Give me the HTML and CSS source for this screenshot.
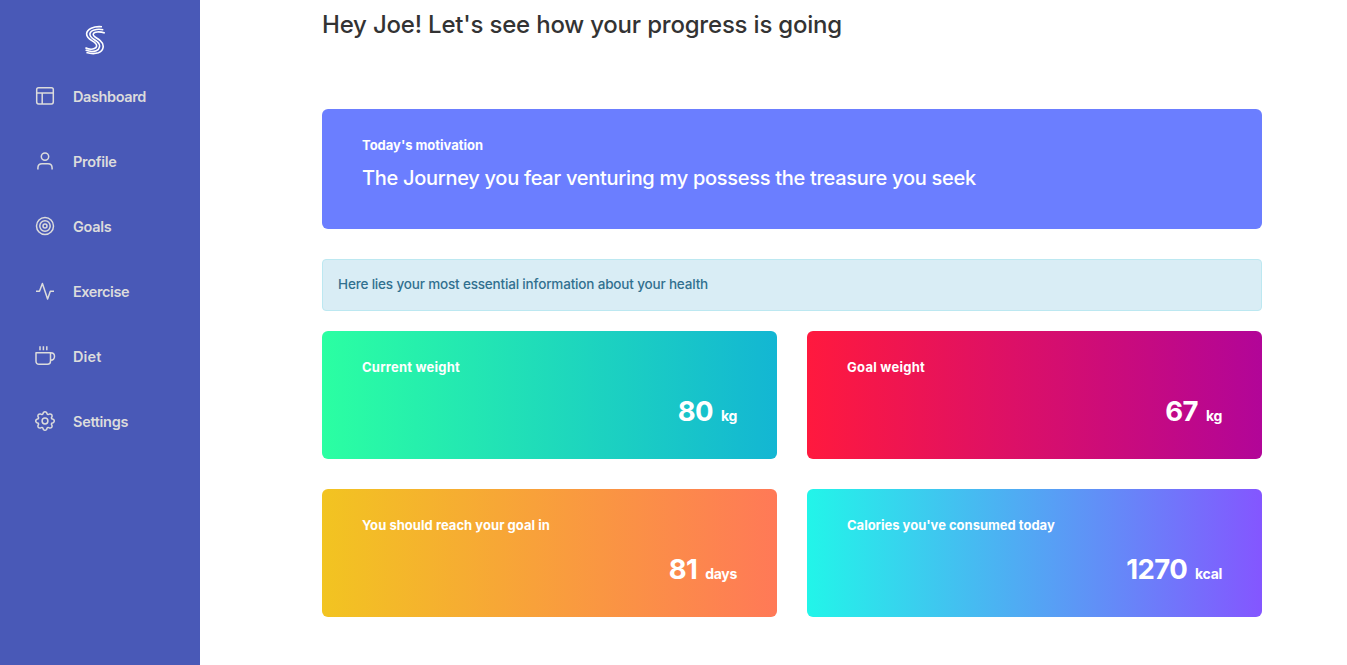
FILE: index.html
```html
<!DOCTYPE html>
<html lang="en">
<head>
<meta charset="utf-8">
<title>Dashboard</title>
<link rel="stylesheet" href="styles.css">
</head>
<body>
<div class="app">
  <aside class="sidebar">
    <svg class="logo" viewBox="0 0 22 30" fill="none" stroke="#fff" stroke-width="1.6">
      <path d="M18 1.800C9.500 1 2.900 4 2.600 8.800c-.2 4.700 4.900 6.300 8.400 9 2.600 2 2 4.700-.7 5.800-2.800 1.100-5.800.7-8.900-.9"/>
      <path d="M19.300 4.700C12.500 3.600 6.500 5 5.900 8.900c-.4 3.800 4.300 5.200 7.500 7.900 3.500 3 2.500 7.500-1.200 8.900-3.400 1.300-7 .9-10.600-.6"/>
      <path d="M20.800 8C15.500 6.300 9.800 6.500 9.200 9.100c-.4 2.500 3.800 3.800 7 6.500 5 4.300 3.200 10.400-1.800 12.200-3.700 1.200-8 .9-12-.3"/>
    </svg>
    <nav class="nav">
      <a class="nav-item"><svg class="icon" viewBox="0 0 20 20"><rect x="1.700" y="1.700" width="16.600" height="16.200" rx="1.800"/><path d="M1.700 7h16.600M7.200 7v10.900"/></svg><span class="dashboard">Dashboard</span></a>
      <a class="nav-item"><svg class="icon" viewBox="0 0 20 20"><circle cx="10" cy="5.600" r="3.700"/><path d="M2.900 18.400v-1.500c0-2.500 1.600-4.100 4.100-4.100h6c2.500 0 4.100 1.600 4.100 4.100v1.500"/></svg><span>Profile</span></a>
      <a class="nav-item"><svg class="icon" viewBox="0 0 20 20"><circle cx="10" cy="10" r="8.500"/><circle cx="10" cy="10" r="5.200"/><circle cx="10" cy="10" r="2"/></svg><span>Goals</span></a>
      <a class="nav-item"><svg class="icon" viewBox="0 0 20 20"><path d="M1 10.200h3.500L7.400 2.400l5.200 15.600 2.700-7.800H19"/></svg><span class="exercise">Exercise</span></a>
      <a class="nav-item"><svg class="icon" viewBox="0 0 20 20"><path d="M1 6.800h14.500v8.500c0 1.800-1.200 3-3 3H4c-1.800 0-3-1.200-3-3zM15.500 6.800c2.500 0 4 1.300 4 3.500s-1.500 4-4 4M5 .3v4M8.400.3v4M11.800.3v4"/></svg><span class="diet">Diet</span></a>
      <a class="nav-item"><svg class="icon" viewBox="0 0 20 20"><circle cx="10" cy="10" r="2.900"/><path d="M8.400 1.600Q10-.2 11.600 1.600L12.300 3.300L13.100 3.600L14.800 2.900Q17.200 2.800 17.100 5.200L16.400 6.900L16.700 7.700L18.400 8.400Q20.200 10 18.400 11.600L16.700 12.300L16.400 13.100L17.100 14.800Q17.200 17.200 14.800 17.100L13.100 16.400L12.300 16.700L11.600 18.400Q10 20.200 8.400 18.400L7.700 16.700L6.900 16.400L5.200 17.100Q2.800 17.200 2.900 14.800L3.600 13.100L3.300 12.300L1.600 11.600Q-.2 10 1.600 8.400L3.300 7.700L3.600 6.900L2.900 5.200Q2.800 2.800 5.200 2.900L6.900 3.600L7.700 3.300Z"/></svg><span>Settings</span></a>
    </nav>
  </aside>
  <main class="main">
    <h1 class="title">Hey Joe! Let's see how your progress is going</h1>
    <section class="motivation">
      <h2 class="label label-motivation">Today's motivation</h2>
      <p class="quote">The Journey you fear venturing my possess the treasure you seek</p>
    </section>
    <div class="notice">Here lies your most essential information about your health</div>
    <section class="cards">
      <article class="card card-current"><h2 class="label label-current">Current weight</h2><p class="value"><b class="number">80</b><span class="unit">kg</span></p></article>
      <article class="card card-target"><h2 class="label label-target">Goal weight</h2><p class="value"><b class="number">67</b><span class="unit">kg</span></p></article>
      <article class="card card-days"><h2 class="label label-days">You should reach your goal in</h2><p class="value"><b class="number">81</b><span class="unit">days</span></p></article>
      <article class="card card-calories"><h2 class="label label-calories">Calories you've consumed today</h2><p class="value"><b class="number">1270</b><span class="unit">kcal</span></p></article>
    </section>
  </main>
</div>
</body>
</html>
```
FILE: styles.css
```css
* { box-sizing: border-box; }
body { margin: 0; background: #fff; font-family: Inter, "Liberation Sans", sans-serif; }
h1, h2, p { margin: 0; }
.app { display: flex; height: 665px; overflow: hidden; }
.sidebar { width: 200px; flex: none; background: #4959b7; padding-top: 25px; }
.logo { display: block; width: 22px; height: 30px; margin: 0 0 9px 84px; }
.nav { display: flex; flex-direction: column; }
.nav-item { display: flex; align-items: center; height: 65px; padding-left: 35px; gap: 18px; color: #dcdcdc; font-size: 14.500px; font-weight: 600; letter-spacing: -0.3px; }
.dashboard { letter-spacing: -0.4px; }
.exercise { letter-spacing: -0.43px; }
.diet { letter-spacing: 0.1px; }
.icon { width: 20px; height: 20px; margin-bottom: 1px; fill: none; stroke: #dcdcdc; stroke-width: 1.5; stroke-linejoin: round; overflow: visible; }
.main { width: 940px; margin-left: 122px; }
.title { height: 109px; padding-top: 10px; color: #333; font-size: 24px; font-weight: 500; line-height: 30px; letter-spacing: -0.2px; white-space: nowrap; }
.motivation { height: 120px; padding: 27px 40px; border-radius: 6px; background: #6b7eff; color: #fff; }
.label { font-size: 13px; font-weight: 700; line-height: 18px; white-space: nowrap; }
.label-motivation { letter-spacing: -0.02px; }
.label-current { letter-spacing: 0.22px; }
.label-target { letter-spacing: 0.26px; }
.label-days { letter-spacing: 0.04px; }
.label-calories { letter-spacing: -0.01px; }
.quote { margin-top: 9px; font-size: 20px; font-weight: 500; line-height: 30px; letter-spacing: -0.29px; white-space: nowrap; }
.notice { height: 52px; margin: 30px 0 20px; padding: 0 15px; border: 1px solid #bce8f1; border-radius: 4px; background: #d9edf5; color: #31708f; font-size: 13.500px; font-weight: 500; line-height: 48px; letter-spacing: -0.17px; }
.cards { display: grid; grid-template-columns: 1fr 1fr; gap: 30px; }
.card { height: 128px; padding: 27px 40px; border-radius: 6px; color: #fff; }
.card-current { background: linear-gradient(90deg, #2bffa2, #13b6d3); }
.card-target { background: linear-gradient(90deg, #ff193e, #b20598); }
.card-days { background: linear-gradient(90deg, #f2c421, #ff7957); }
.card-calories { background: linear-gradient(90deg, #22f5e9, #8456ff); }
.value { display: flex; justify-content: flex-end; align-items: baseline; gap: 8px; margin-top: 16px; line-height: 38px; }
.number { font-size: 27.500px; font-weight: 700; letter-spacing: -0.6px; }
.unit { font-size: 14px; font-weight: 700; letter-spacing: -0.3px; }
```
